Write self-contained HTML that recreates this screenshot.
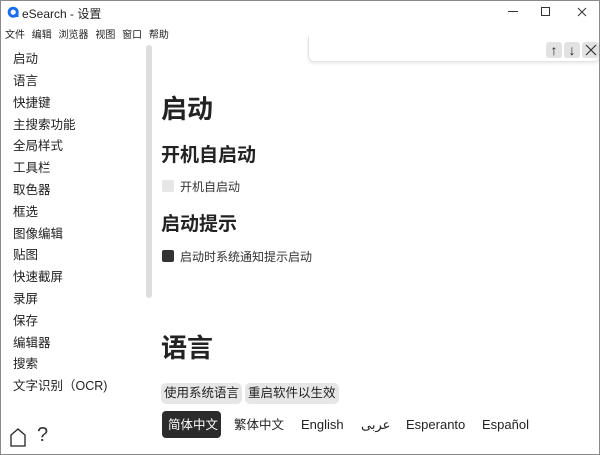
<!DOCTYPE html>
<html><head><meta charset="utf-8"><style>
*{margin:0;padding:0;box-sizing:border-box}
body{width:600px;height:455px;overflow:hidden;background:#fff;font-family:"Liberation Sans","Noto Sans CJK SC",sans-serif;color:#222;position:relative}
.a{position:absolute;white-space:nowrap}
.frame{position:absolute;left:0;top:0;width:600px;height:455px;border:1px solid #8a8a8a;pointer-events:none}
.side{font-size:12.5px;color:#222;left:13px;line-height:16px}
.btn{background:#e6e6e6;border-radius:5px;font-size:12.5px;padding:0 3px;height:21px;line-height:21px}
.lang{font-size:13px;top:417px;line-height:16px}
</style></head><body>
<svg class="a" style="left:7px;top:6px" width="13" height="13" viewBox="0 0 13 13"><circle cx="6.2" cy="6.2" r="5.5" fill="#1a6ef0"/><circle cx="6.2" cy="6.2" r="2.6" fill="#fff"/><rect x="7.5" y="8" width="4" height="3" fill="#1a6ef0"/></svg>
<div class="a" style="left:22px;top:5px;font-size:12px">eSearch - 设置</div>
<div class="a" style="left:508px;top:11px;width:10px;height:1px;background:#333"></div>
<div class="a" style="left:541px;top:7px;width:9px;height:9px;border:1px solid #333"></div>
<svg class="a" style="left:577px;top:7px" width="10" height="10"><path d="M1 1L9 9M9 1L1 9" stroke="#333" stroke-width="1"/></svg>
<div class="a" style="left:5px;top:26px;font-size:10px;word-spacing:4px">文件 编辑 浏览器 视图 窗口 帮助</div>
<div class="a" style="left:308px;top:36px;width:292px;height:26px;border:1px solid #e4e4e4;border-top:none;border-radius:0 0 6px 6px;box-shadow:0 2px 3px rgba(0,0,0,.08)"></div>
<div class="a" style="left:546px;top:42px;width:16px;height:16px;background:#e2e2e2;border-radius:3px;font-size:14px;line-height:16px;text-align:center">↑</div>
<div class="a" style="left:564px;top:42px;width:16px;height:16px;background:#e2e2e2;border-radius:3px;font-size:14px;line-height:16px;text-align:center">↓</div>
<div class="a" style="left:582px;top:42px;width:17px;height:16px;background:#e2e2e2;border-radius:3px"></div>
<svg class="a" style="left:584px;top:43px" width="14" height="14"><path d="M2 2L12 12M12 2L2 12" stroke="#333" stroke-width="1.2"/></svg>
<div class="a" style="left:146px;top:45px;width:6px;height:253px;background:#ddd;border-radius:3px"></div>
<div class="a side" style="top:51px">启动</div>
<div class="a side" style="top:73px">语言</div>
<div class="a side" style="top:95px">快捷键</div>
<div class="a side" style="top:117px">主搜索功能</div>
<div class="a side" style="top:138px">全局样式</div>
<div class="a side" style="top:160px">工具栏</div>
<div class="a side" style="top:182px">取色器</div>
<div class="a side" style="top:204px">框选</div>
<div class="a side" style="top:226px">图像编辑</div>
<div class="a side" style="top:247px">贴图</div>
<div class="a side" style="top:269px">快速截屏</div>
<div class="a side" style="top:291px">录屏</div>
<div class="a side" style="top:313px">保存</div>
<div class="a side" style="top:335px">编辑器</div>
<div class="a side" style="top:356px">搜索</div>
<div class="a side" style="top:378px">文字识别（OCR)</div>
<svg class="a" style="left:9px;top:427px" width="18" height="20"><path d="M2 19V8L9 2L16 8V19Z" fill="none" stroke="#222" stroke-width="1.3"/></svg>
<div class="a" style="left:37px;top:424px;font-size:20px;color:#333">?</div>
<div class="a" style="left:161px;top:89px;font-size:26px;font-weight:bold">启动</div>
<div class="a" style="left:161px;top:140px;font-size:19px;font-weight:bold">开机自启动</div>
<div class="a" style="left:162px;top:180px;width:12px;height:12px;background:#e6e6e6;border-radius:2px"></div>
<div class="a" style="left:180px;top:178px;font-size:12px;color:#333">开机自启动</div>
<div class="a" style="left:161px;top:209px;font-size:19px;font-weight:bold">启动提示</div>
<div class="a" style="left:162px;top:250px;width:12px;height:12px;background:#333;border-radius:2px"></div>
<div class="a" style="left:180px;top:248px;font-size:12px;color:#333">启动时系统通知提示启动</div>
<div class="a" style="left:161px;top:328px;font-size:26px;font-weight:bold">语言</div>
<div class="a btn" style="left:161px;top:383px">使用系统语言</div>
<div class="a btn" style="left:245px;top:383px">重启软件以生效</div>
<div class="a" style="left:162px;top:411px;width:59px;height:27px;background:#2b2b2b;border-radius:4px"></div>
<div class="a lang" style="left:168px;color:#fff;font-size:12.5px">简体中文</div>
<div class="a lang" style="left:234px;font-size:12.5px">繁体中文</div>
<div class="a lang" style="left:301px">English</div>
<div class="a lang" style="left:361px">عربى</div>
<div class="a lang" style="left:406px">Esperanto</div>
<div class="a lang" style="left:482px">Español</div>
<div class="frame"></div>
</body></html>
